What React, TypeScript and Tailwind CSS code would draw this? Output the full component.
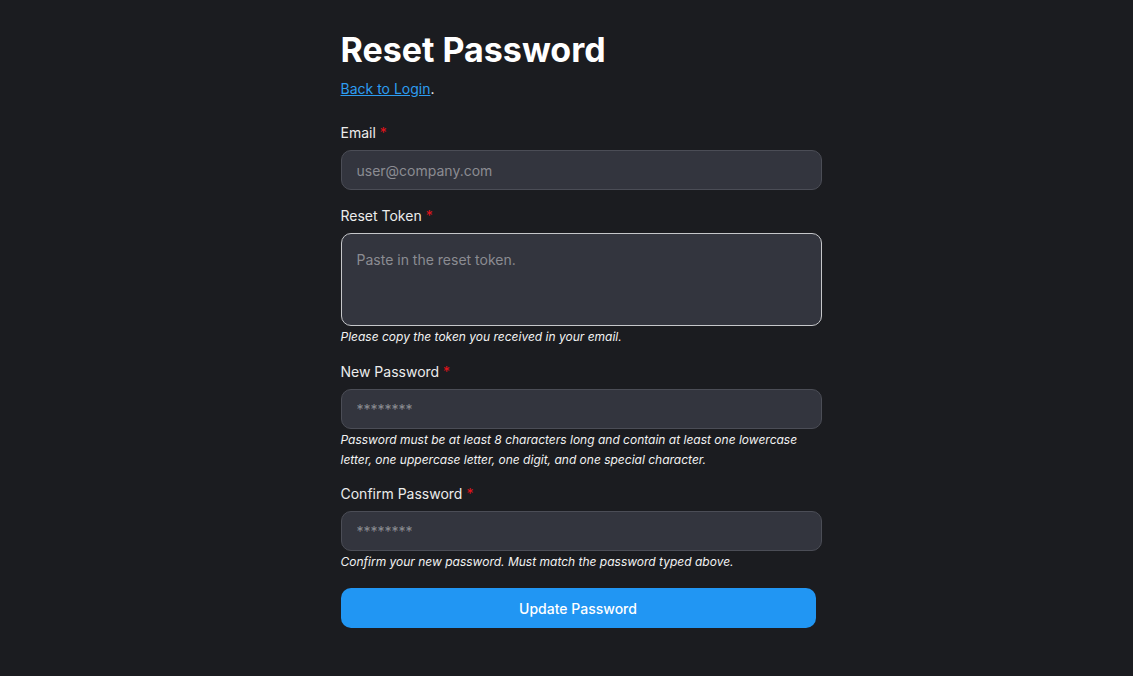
import React from "react";

function Label({ children }: { children: React.ReactNode }) {
  return (
    <label className="block text-[14px] leading-[20px] text-[#ececec] mb-[7px]">
      {children} <span className="text-[#e5121a]">*</span>
    </label>
  );
}

function Help({ children }: { children: React.ReactNode }) {
  return <p className="text-[12px] leading-[20px] italic text-[#f2f2f2] mt-px">{children}</p>;
}

const inputCls =
  "block w-full h-[40px] rounded-[10px] bg-[#33353e] border border-[#4b4d56] px-[15px] text-[14px] text-[#e5e5e5] placeholder:text-[#8b8c92] outline-none";

export default function App() {
  return (
    <div
      className="min-h-[676px] w-full bg-[#1b1c20]"
      style={{ fontFamily: "Inter, 'Noto Sans', sans-serif" }}
    >
      <div className="mx-auto w-[510px] pl-[29px] pt-[30px]">
        <h1 className="text-[34px] leading-[40px] font-bold text-white">Reset Password</h1>
        <p className="mt-[9px] text-[14px] leading-[20px] text-white">
          <a href="#" className="text-[#2d9cf1] underline">
            Back to Login
          </a>
          .
        </p>
        <form className="mt-[24px]">
          <div className="mb-[16px]">
            <Label>Email</Label>
            <input className={inputCls} placeholder="user@company.com" />
          </div>
          <div className="mb-[15px]">
            <Label>Reset Token</Label>
            <textarea
              className="block w-full h-[93px] rounded-[10px] bg-[#33353e] border border-[#c6c7ca] px-[15px] pt-[16px] pb-[12px] text-[14px] leading-[20px] text-[#e5e5e5] placeholder:text-[#8b8c92] outline-none resize-none"
              placeholder="Paste in the reset token."
            />
            <Help>Please copy the token you received in your email.</Help>
          </div>
          <div className="mb-[14px]">
            <Label>New Password</Label>
            <input className={inputCls} type="password" placeholder="********" />
            <Help>
              Password must be at least 8 characters long and contain at least one lowercase letter, one
              uppercase letter, one digit, and one special character.
            </Help>
          </div>
          <div className="mb-[16px]">
            <Label>Confirm Password</Label>
            <input className={inputCls} type="password" placeholder="********" />
            <Help>Confirm your new password. Must match the password typed above.</Help>
          </div>
          <button
            type="button"
            className="block w-[475px] h-[40px] rounded-[10px] bg-[#2196f3] text-white text-[14px] font-medium"
          >
            Update Password
          </button>
        </form>
      </div>
    </div>
  );
}
